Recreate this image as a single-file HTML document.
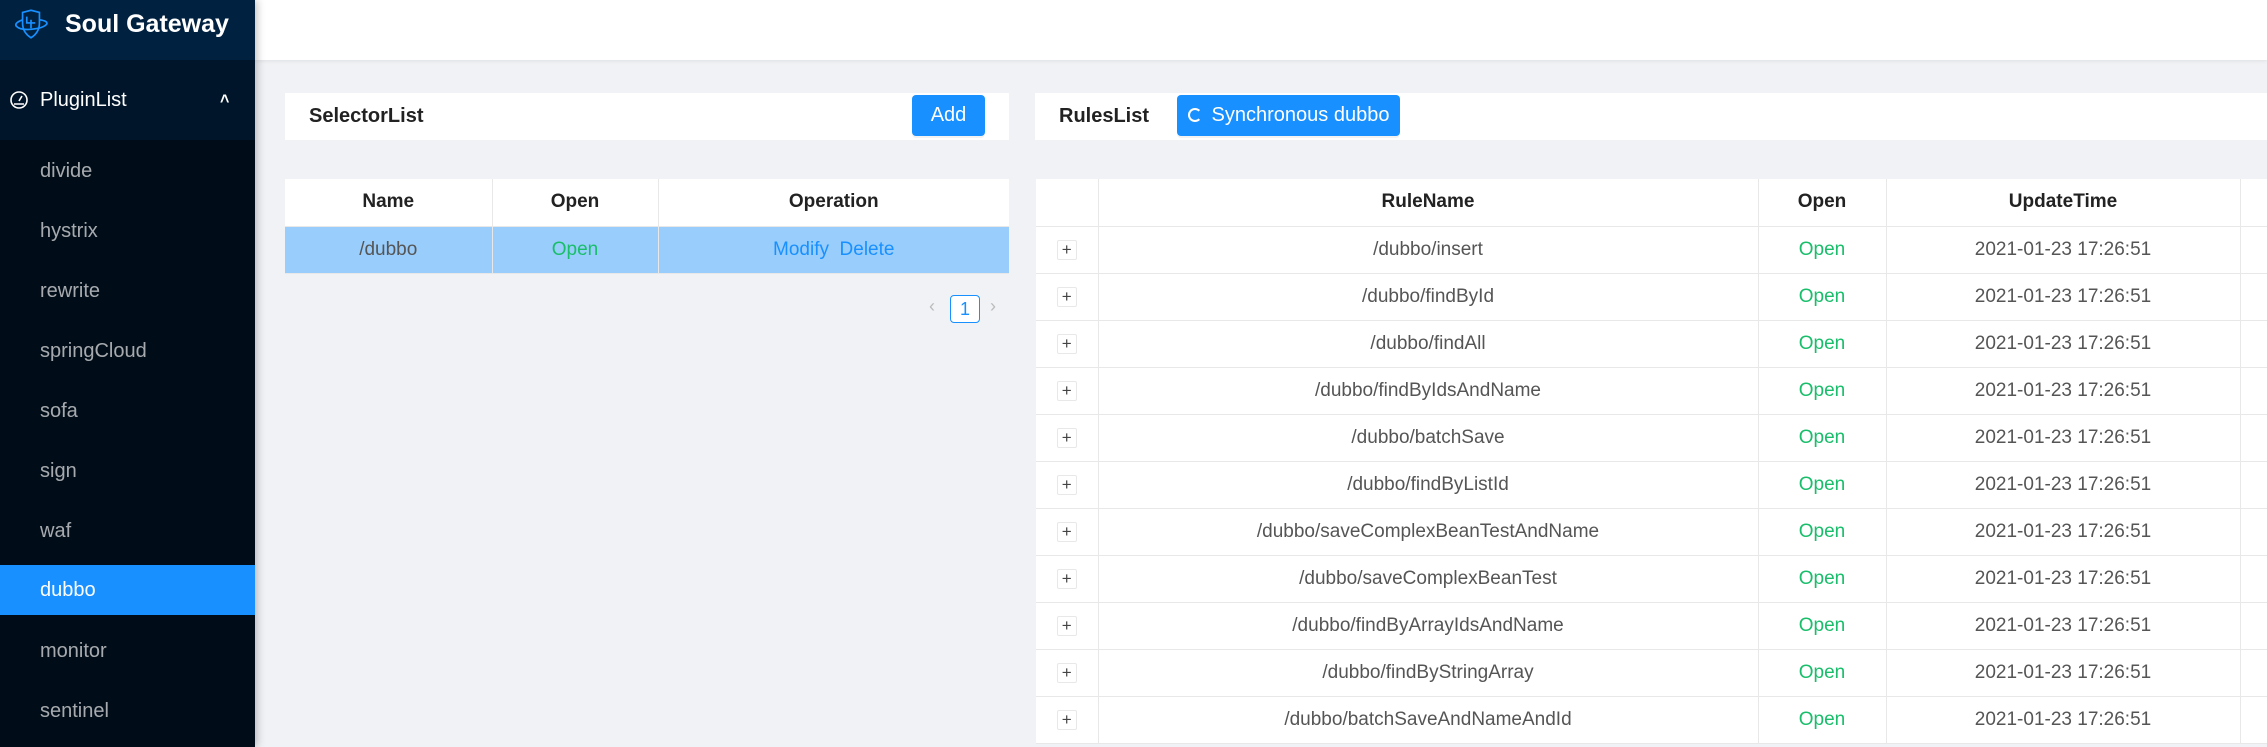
<!DOCTYPE html>
<html><head><meta charset="utf-8"><style>
*{box-sizing:border-box;margin:0;padding:0}
body{width:2267px;height:747px;overflow:hidden;background:#f0f2f5;font-family:"Liberation Sans",Arial,sans-serif;position:relative}
.sb{position:absolute;left:0;top:0;width:255px;height:747px;background:#000c17;box-shadow:2px 0 8px rgba(0,0,0,.25);z-index:2}
.logo{height:60px;background:#002140;position:relative}
.logo span{position:absolute;left:65px;top:10px;color:#fff;font-weight:bold;font-size:25px}
.pl{height:80px;background:#001529;position:relative;color:#fff;font-size:20px}
.pl span{position:absolute;left:40px;top:40px;line-height:30px;transform:translateY(-50%)}
.it{position:absolute;left:0;width:255px;height:50px;line-height:50px;padding-left:40px;color:rgba(255,255,255,.65);font-size:20px}
.top{position:absolute;left:255px;top:0;right:0;height:60px;background:#fff;box-shadow:0 1px 4px rgba(0,21,41,.08)}
.card{position:absolute;background:#fff}
.h{position:absolute;font-size:20px;color:#222;font-weight:bold;top:93px;height:47px;line-height:47px}
.btn{position:absolute;background:#1890ff;color:#fff;border-radius:4px;font-size:20px;text-align:center;line-height:41px;height:41px;top:95px;box-shadow:0 2px 0 rgba(0,0,0,.05)}
table{border-collapse:collapse;position:absolute;background:#fff;font-size:19px;color:#555;table-layout:fixed}
td,th{height:47px;text-align:center;border-bottom:1px solid #e8e8e8;border-right:1px solid #e8e8e8;font-weight:normal}
th{color:#222;font-weight:bold;font-size:19px}
.g{color:#19be6b}.b{color:#1890ff}
.pb{display:inline-block;width:20px;height:20px;border:1px solid #e8e8e8;border-radius:2px;line-height:17px;font-size:17px;color:#444}
</style></head><body>
<div class="sb">
<div class="logo"><svg style="position:absolute;left:12px;top:8px" width="38" height="32" viewBox="0 0 36 30" fill="none" stroke="#1890ff" stroke-width="1.6"><path d="M10 4 L18 2 L26 4 L26 14 Q26 23 18 28 Q10 23 10 14 Z"/><path d="M10 11 Q2 14 4 17 Q8 21 18 20 Q30 19 33 15 Q34 12 26 11"/><path d="M14 8 V14 H22 M18 11 V19"/></svg><span>Soul Gateway</span></div>
<div class="pl"><svg style="position:absolute;left:9px;top:30px" width="20" height="20" viewBox="0 0 20 20" fill="none" stroke="#fff" stroke-width="1.6"><circle cx="10" cy="10" r="8"/><path d="M10 11 L13 6 M5 14 H15"/></svg><span>PluginList</span><span style="left:220px;font-size:16px;font-weight:bold">˄</span></div>
<div class="it" style="top:146px">divide</div>
<div class="it" style="top:206px">hystrix</div>
<div class="it" style="top:266px">rewrite</div>
<div class="it" style="top:326px">springCloud</div>
<div class="it" style="top:386px">sofa</div>
<div class="it" style="top:446px">sign</div>
<div class="it" style="top:506px">waf</div>
<div class="it" style="top:565px;background:#1890ff;color:#fff">dubbo</div>
<div class="it" style="top:626px">monitor</div>
<div class="it" style="top:686px">sentinel</div>
</div>
<div class="top"></div>
<div class="card" style="left:285px;top:93px;width:724px;height:47px"></div>
<div class="h" style="left:309px">SelectorList</div>
<div class="btn" style="left:912px;width:73px">Add</div>
<div class="card" style="left:1035px;top:93px;width:1232px;height:47px"></div>
<div class="h" style="left:1059px">RulesList</div>
<div class="btn" style="left:1177px;width:223px"><span style="display:inline-block;width:14px;height:14px;border:2px solid #fff;border-right-color:transparent;border-radius:50%;margin-right:10px;vertical-align:-1px"></span>Synchronous dubbo</div>
<table style="left:285px;top:179px;width:724px">
<colgroup><col style="width:207px"><col style="width:166px"><col style="width:351px"></colgroup>
<tr><th>Name</th><th>Open</th><th style="border-right:0">Operation</th></tr>
<tr style="background:#99cdfb"><td>/dubbo</td><td class="g">Open</td><td class="b" style="border-right:0">Modify&nbsp; Delete</td></tr>
</table>
<div style="position:absolute;left:929px;top:296px;color:#bbb;font-size:18px">‹</div>
<div style="position:absolute;left:950px;top:295px;width:30px;height:28px;border:1px solid #1890ff;border-radius:4px;background:#fff;color:#1890ff;text-align:center;line-height:26px;font-size:18px">1</div>
<div style="position:absolute;left:990px;top:296px;color:#bbb;font-size:18px">›</div>
<table style="left:1036px;top:179px;width:1240px">
<colgroup><col style="width:62px"><col style="width:660px"><col style="width:128px"><col style="width:354px"><col style="width:36px"></colgroup>
<tr><th></th><th>RuleName</th><th>Open</th><th>UpdateTime</th><th></th></tr>
<tr><td><span class="pb">+</span></td><td>/dubbo/insert</td><td class="g">Open</td><td>2021-01-23 17:26:51</td><td></td></tr>
<tr><td><span class="pb">+</span></td><td>/dubbo/findById</td><td class="g">Open</td><td>2021-01-23 17:26:51</td><td></td></tr>
<tr><td><span class="pb">+</span></td><td>/dubbo/findAll</td><td class="g">Open</td><td>2021-01-23 17:26:51</td><td></td></tr>
<tr><td><span class="pb">+</span></td><td>/dubbo/findByIdsAndName</td><td class="g">Open</td><td>2021-01-23 17:26:51</td><td></td></tr>
<tr><td><span class="pb">+</span></td><td>/dubbo/batchSave</td><td class="g">Open</td><td>2021-01-23 17:26:51</td><td></td></tr>
<tr><td><span class="pb">+</span></td><td>/dubbo/findByListId</td><td class="g">Open</td><td>2021-01-23 17:26:51</td><td></td></tr>
<tr><td><span class="pb">+</span></td><td>/dubbo/saveComplexBeanTestAndName</td><td class="g">Open</td><td>2021-01-23 17:26:51</td><td></td></tr>
<tr><td><span class="pb">+</span></td><td>/dubbo/saveComplexBeanTest</td><td class="g">Open</td><td>2021-01-23 17:26:51</td><td></td></tr>
<tr><td><span class="pb">+</span></td><td>/dubbo/findByArrayIdsAndName</td><td class="g">Open</td><td>2021-01-23 17:26:51</td><td></td></tr>
<tr><td><span class="pb">+</span></td><td>/dubbo/findByStringArray</td><td class="g">Open</td><td>2021-01-23 17:26:51</td><td></td></tr>
<tr><td><span class="pb">+</span></td><td>/dubbo/batchSaveAndNameAndId</td><td class="g">Open</td><td>2021-01-23 17:26:51</td><td></td></tr>
</table>
</body></html>
